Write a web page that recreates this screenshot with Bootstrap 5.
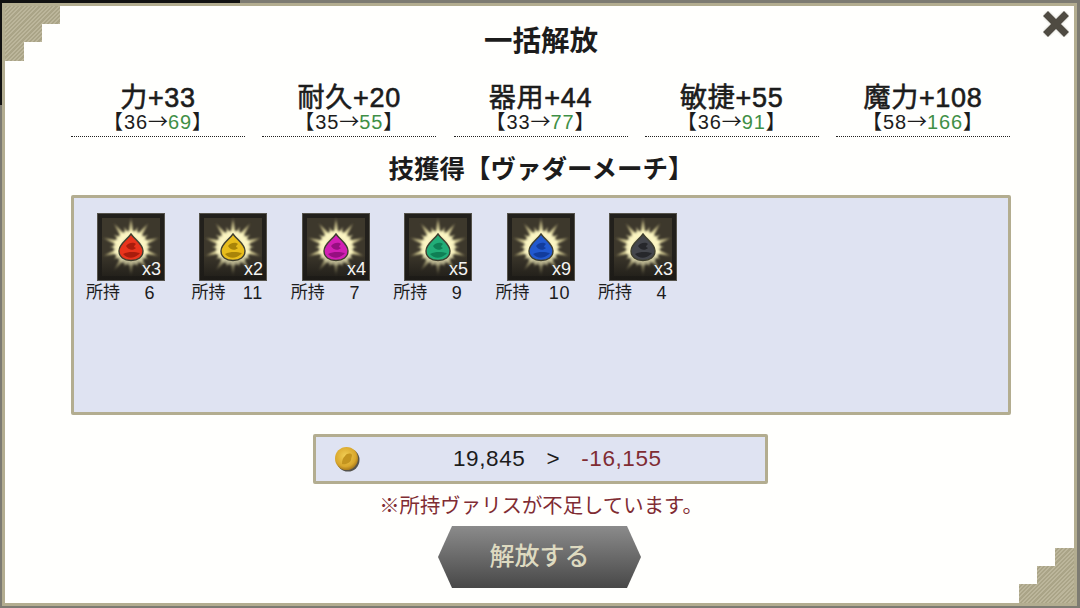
<!DOCTYPE html>
<html lang="ja">
<head>
    <meta charset="UTF-8">
    <meta name="viewport" content="width=device-width, initial-scale=1.0">
    <title>一括解放</title>
    <link href="https://cdn.jsdelivr.net/npm/bootstrap@5.3.0/dist/css/bootstrap.min.css" rel="stylesheet">
    <style>
        html, body {
            width: 1080px;
            height: 608px;
            overflow: hidden;
        }
        body {
            background: linear-gradient(#111, #111) 0 0 / 240px 3px no-repeat, linear-gradient(#111, #111) 0 0 / 2px 105px no-repeat, #7d7b72;
            font-family: "Liberation Sans", "Noto Sans CJK JP", sans-serif;
            color: #1c1c1c;
            padding: 3px 3px 2px 2px;
        }
        .frame {
            position: relative;
            height: 603px;
            background: #fffffd;
            border: 3px solid #b3ad90;
            padding: 0 63px 0 66px;
        }
        .corner {
            position: absolute;
            width: 55px;
            height: 55px;
            background: repeating-linear-gradient(135deg, #aaa487 0, #aaa487 1.5px, #bcb69b 1.5px, #bcb69b 3px);
        }
        .corner-tl {
            top: 0;
            left: 0;
            clip-path: polygon(0 0, 100% 0, 100% 18px, 37px 18px, 37px 36px, 19px 36px, 19px 100%, 0 100%);
        }
        .corner-br {
            right: 0;
            bottom: 0;
            clip-path: polygon(100% 0, 100% 100%, 0 100%, 0 36px, 18px 36px, 18px 18px, 36px 18px, 36px 0);
        }
        .close-x {
            position: absolute;
            top: 3px;
            right: 3px;
            width: 30px;
            height: 30px;
        }
        .page-title {
            font-size: 28.5px;
            font-weight: 700;
            line-height: 36px;
            margin: 0;
            padding-top: 17px;
            text-align: center;
        }
        .stat-row {
            margin-top: 20px;
            padding-right: 1px;
        }
        .stat-cell {
            width: 174px;
            text-align: center;
            border-bottom: 1px dotted #222;
            height: 58px;
        }
        .stat-name {
            font-size: 27px;
            line-height: 26px;
            padding-top: 6px;
            letter-spacing: 0.7px;
            -webkit-text-stroke: 0.6px #1c1c1c;
        }
        .stat-range {
            font-size: 20px;
            line-height: 20px;
            letter-spacing: 0.9px;
            white-space: nowrap;
        }
        .stat-arrow {
            font-family: "Noto Sans CJK JP", sans-serif;
            letter-spacing: 0;
        }
        .up {
            color: #3f8f46;
        }
        .skill-title {
            font-size: 25.5px;
            font-weight: 700;
            line-height: 32px;
            text-align: center;
            margin: 16px 0 10px;
        }
        .item-panel {
            height: 220px;
            background: #dfe3f2;
            border: 3px solid #b3ad90;
            border-radius: 2px;
            padding: 15px 0 0 12px;
            display: flex;
            gap: 7px;
        }
        .item-cell {
            width: 95.4px;
            flex: none;
        }
        .item-icon {
            display: block;
            width: 68px;
            height: 68px;
            margin-left: 11px;
        }
        .item-own {
            display: flex;
            font-size: 17px;
            line-height: 24px;
            white-space: nowrap;
        }
        .own-count {
            width: 60px;
            text-align: center;
            font-size: 18px;
            letter-spacing: 0.8px;
        }
        .item-cell:nth-child(2) .item-own {
            margin-left: 3px;
        }
        .item-cell:nth-child(2) .own-count {
            width: 55px;
        }
        .gold-bar {
            width: 455px;
            height: 50px;
            margin: 19px 0 0 242px;
            background: #dfe3f2;
            border: 3px solid #b3ad90;
            border-radius: 2px;
            display: flex;
            align-items: center;
            padding-left: 18px;
            font-size: 22.5px;
            letter-spacing: 0.6px;
        }
        .gold-values {
            margin-left: 93px;
            white-space: nowrap;
            display: flex;
            gap: 21px;
        }
        .gold-after, .warn-text {
            color: #7f2c33;
        }
        .warn-text {
            font-size: 20.4px;
            line-height: 28px;
            text-align: center;
            margin-top: 8px;
        }
        .release-btn {
            display: block;
            width: 203px;
            height: 62px;
            margin: 6px 0 0 367px;
            border: 0;
            padding: 0 0 4px;
            background: linear-gradient(180deg, #8b8b8b, #484848);
            clip-path: polygon(14px 0, 189px 0, 100% 50%, 189px 100%, 14px 100%, 0 50%);
            color: #dedac0;
            font-size: 25px;
            font-weight: 500;
            font-family: "Noto Sans CJK JP", sans-serif;
        }
    </style>
</head>
<body>
    <div class="frame">
        <div class="corner corner-tl"></div>
        <div class="corner corner-br"></div>
        <svg class="close-x" viewBox="0 0 30 30">
            <path d="M7 7L23 23M23 7L7 23" stroke="#f0f0ec" stroke-width="10" stroke-linecap="round"/>
            <path d="M7 7L23 23M23 7L7 23" stroke="#4f4b42" stroke-width="7" stroke-linecap="square"/>
        </svg>

        <h1 class="page-title">一括解放</h1>

        <div class="stat-row d-flex justify-content-between" id="stats"></div>

        <h2 class="skill-title">技獲得【ヴァダーメーチ】</h2>

        <div class="item-panel" id="items"></div>

        <div class="gold-bar">
            <svg width="26" height="26" viewBox="0 0 26 26">
                <defs>
                    <radialGradient id="coin" cx="45%" cy="40%" r="60%">
                        <stop offset="0" stop-color="#f2cf55"/>
                        <stop offset="0.75" stop-color="#d9a72c"/>
                        <stop offset="1" stop-color="#a87a1c"/>
                    </radialGradient>
                </defs>
                <circle cx="14" cy="14" r="11.5" fill="#55534c"/>
                <circle cx="12.5" cy="12.5" r="11.5" fill="url(#coin)"/>
                <path d="M8 18c0-4 1-6 3-8c2-3 6-3 7-1c0 2-1 3-1 5c-1 3-6 5-9 4z" fill="#c3941f"/>
            </svg>
            <div class="gold-values"><span>19,845</span><span>&gt;</span><span class="gold-after">-16,155</span></div>
        </div>

        <p class="warn-text mb-0">※所持ヴァリスが不足しています。</p>

        <button class="release-btn" type="button">解放する</button>
    </div>

    <script>
        const stats = [
            ["力", 33, 36, 69],
            ["耐久", 20, 35, 55],
            ["器用", 44, 33, 77],
            ["敏捷", 55, 36, 91],
            ["魔力", 108, 58, 166]
        ];
        const items = [
            ["#e8341c", "#a81c0c", 3, 6],
            ["#e8bd1c", "#a88409", 2, 11],
            ["#d21fb4", "#960f80", 4, 7],
            ["#22ad78", "#0f7f55", 5, 9],
            ["#2259cf", "#123c9c", 9, 10],
            ["#44464c", "#26272b", 3, 4]
        ];

        document.getElementById("stats").innerHTML = stats.map(s => `
            <div class="stat-cell">
                <div class="stat-name">${s[0]}+${s[1]}</div>
                <div class="stat-range">【${s[2]}<span class="stat-arrow">→</span><span class="up">${s[3]}</span>】</div>
            </div>`).join("");

        // rays around the drop, long and short in turn
        function rays() {
            let d = "";
            for (let i = 0; i < 20; i++) {
                const a = i * Math.PI / 10;
                const r = i % 2 ? 21 : 30;
                const side = 0.3;
                const x = 34 + Math.sin(a) * r, y = 34 - Math.cos(a) * r;
                const x1 = 34 + Math.sin(a - side) * 10, y1 = 34 - Math.cos(a - side) * 10;
                const x2 = 34 + Math.sin(a + side) * 10, y2 = 34 - Math.cos(a + side) * 10;
                d += `M${x1.toFixed(1)} ${y1.toFixed(1)}L${x.toFixed(1)} ${y.toFixed(1)}L${x2.toFixed(1)} ${y2.toFixed(1)}Z`;
            }
            return d;
        }

        document.getElementById("items").innerHTML = items.map((it, i) => `
            <div class="item-cell">
                <svg class="item-icon" viewBox="0 0 68 68">
                    <defs>
                        <radialGradient id="glow${i}" gradientUnits="userSpaceOnUse" cx="34" cy="34" r="30">
                            <stop offset="0" stop-color="#fffbd0"/>
                            <stop offset="0.5" stop-color="#f6efb4"/>
                            <stop offset="0.8" stop-color="#b0a676"/>
                            <stop offset="1" stop-color="#4a4434"/>
                        </radialGradient>
                        <linearGradient id="shade${i}" x1="0" y1="0" x2="0" y2="1">
                            <stop offset="0.6" stop-color="#1c1a16" stop-opacity="0"/>
                            <stop offset="1" stop-color="#1c1a16" stop-opacity="0.9"/>
                        </linearGradient>
                        <filter id="soft${i}" x="-10%" y="-10%" width="120%" height="120%">
                            <feGaussianBlur stdDeviation="1.1"/>
                        </filter>
                    </defs>
                    <rect width="68" height="68" fill="#22201c"/>
                    <rect x="0.5" y="0.5" width="67" height="67" fill="none" stroke="#55534c"/>
                    <rect x="5" y="5" width="58" height="58" fill="#3d382c"/>
                    <path d="${rays()}" fill="url(#glow${i})" filter="url(#soft${i})"/>
                    <circle cx="34" cy="35" r="17" fill="#fff9c8" opacity="0.75" filter="url(#soft${i})"/>
                    <rect x="1" y="1" width="66" height="66" fill="url(#shade${i})"/>
                    <path d="M34 21C30 27 22 31 22 38C22 44 27 47.5 34 47.5C41 47.5 46 44 46 38C46 31 38 27 34 21Z" fill="${it[0]}" stroke="#3f3f30" stroke-width="1.4"/>
                    <path d="M29 33C32 29 37 29 39 31C37 33 36 34 39 35C36 38 31 37 29 33ZM26 41C32 38 38 39 43 40C38 46 30 46 26 41Z" fill="${it[1]}"/>
                    <text x="64" y="62" text-anchor="end" font-size="18" fill="#f4f4f4" font-family="Liberation Sans">x${it[2]}</text>
                </svg>
                <div class="item-own"><span>所持</span><span class="own-count">${it[3]}</span></div>
            </div>`).join("");
    </script>
    <script src="https://cdn.jsdelivr.net/npm/bootstrap@5.3.0/dist/js/bootstrap.bundle.min.js"></script>
</body>
</html>
